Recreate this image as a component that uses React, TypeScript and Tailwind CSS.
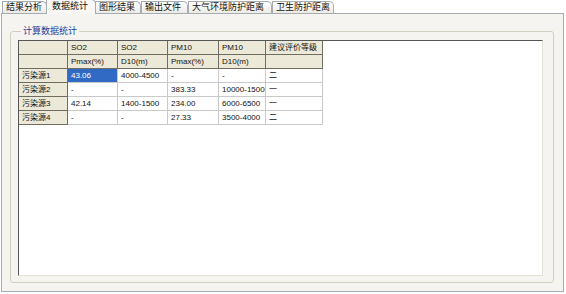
import React from "react";

const tabs = [
  { label: "结果分析", w: "w-[45px]" },
  { label: "数据统计", w: "w-[50px]", active: true },
  { label: "图形结果", w: "w-[46px]" },
  { label: "输出文件", w: "w-[47px]" },
  { label: "大气环境防护距离", w: "w-[84px]" },
  { label: "卫生防护距离", w: "w-[62px]" },
];

const colW = ["w-[49px]", "w-[50px]", "w-[50px]", "w-[51px]", "w-[47px]", "w-[57px]"];

const head = [
  ["", "SO2", "SO2", "PM10", "PM10", "建议评价等级"],
  ["", "Pmax(%)", "D10(m)", "Pmax(%)", "D10(m)", ""],
];

const rows = [
  ["污染源1", "43.06", "4000-4500", "-", "-", "二"],
  ["污染源2", "-", "-", "383.33", "10000-15000", "一"],
  ["污染源3", "42.14", "1400-1500", "234.00", "6000-6500", "一"],
  ["污染源4", "-", "-", "27.33", "3500-4000", "二"],
];

function Cell({
  text,
  index,
  fixed,
  selected,
}: {
  text: string;
  index: number;
  fixed?: boolean;
  selected?: boolean;
}) {
  const tone = fixed
    ? "bg-[#ece9d8] border-[#6f6c61]"
    : selected
      ? "bg-[#316ac5] text-white border-[#c9c9c9]"
      : "bg-white border-[#c9c9c9]";
  return (
    <div
      className={`${colW[index]} ${tone} h-[14px] shrink-0 overflow-hidden whitespace-nowrap border-r border-b pl-[3px] leading-[13px]`}
    >
      {text}
    </div>
  );
}

export default function App() {
  return (
    <div className="flex h-[294px] w-[566px] flex-col bg-white pl-px pr-[2px] font-['Liberation_Sans','Noto_Sans_CJK_SC',sans-serif] text-[8px] text-[#111]">
      <div className="relative z-10 flex h-[13px] items-end pl-px">
        {tabs.map((t) => (
          <div
            key={t.label}
            className={`${t.w} shrink-0 overflow-hidden whitespace-nowrap rounded-tr-[5px] border border-b-0 border-[#a5acb2] pl-[3px] text-[9px] ${
              t.active
                ? "-mx-px -mb-px h-[15px] bg-[#f8f7f3] pl-[5px] leading-[13px]"
                : "h-[12px] bg-gradient-to-b from-white to-[#ecebe5] leading-[11px]"
            }`}
          >
            {t.label}
          </div>
        ))}
      </div>

      <div className="mb-[2px] flex flex-1 border border-[#a5acb2] bg-[#f5f4f0] pt-[12px] pr-[9px] pb-[8px] pl-[8px]">
        <fieldset className="flex flex-1 flex-col rounded-[3px] border border-[#d0d0bf] pr-[10px] pb-[6px] pl-[7px]">
          <legend className="ml-[3px] px-[2px] text-[9px] leading-[10px] text-[#1f3c96]">计算数据统计</legend>
          <div className="mt-[4px] flex-1 border-t border-l border-t-[#555] border-l-[#555] border-r border-b border-r-[#e4e1d6] border-b-[#e4e1d6] bg-white">
            {head.map((r, ri) => (
              <div key={ri} className="flex">
                {r.map((c, ci) => (
                  <Cell key={ci} text={c} index={ci} fixed />
                ))}
              </div>
            ))}
            {rows.map((r, ri) => (
              <div key={ri} className="flex">
                {r.map((c, ci) => (
                  <Cell
                    key={ci}
                    text={c}
                    index={ci}
                    fixed={ci === 0}
                    selected={ri === 0 && ci === 1}
                  />
                ))}
              </div>
            ))}
          </div>
        </fieldset>
      </div>
    </div>
  );
}
